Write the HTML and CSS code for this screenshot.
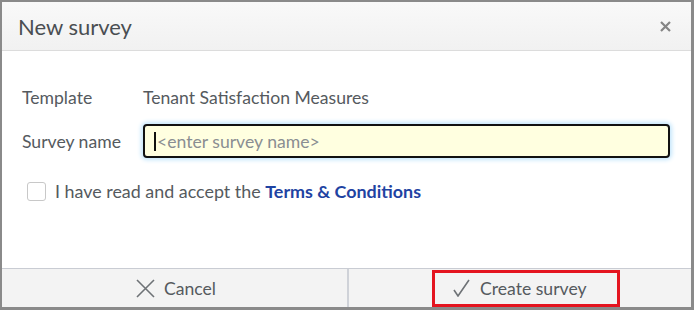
FILE: index.html
```html
<!DOCTYPE html>
<html>
<head>
<meta charset="utf-8">
<link rel="stylesheet" href="styles.css">
</head>
<body>
<div class="backdrop">
  <div class="dialog">
    <div class="header">
      <h1 class="title">New survey</h1>
      <span class="close">
        <svg width="11" height="11" viewBox="0 0 11 11"><path d="M1 1L10 10M10 1L1 10" stroke="#858585" stroke-width="2.2"/></svg>
      </span>
    </div>
    <div class="body">
      <div class="row template-row">
        <span class="label">Template</span>
        <span class="value">Tenant Satisfaction Measures</span>
      </div>
      <div class="row name-row">
        <span class="label">Survey name</span>
        <div class="input"><span class="caret"></span><span class="placeholder">&lt;enter survey name&gt;</span></div>
      </div>
      <div class="check-row">
        <span class="checkbox"></span>
        <span class="check-text">I have read and accept the <a class="link">Terms &amp; Conditions</a></span>
      </div>
    </div>
    <div class="footer">
      <div class="btn cancel">
        <svg width="19" height="19" viewBox="0 0 19 19"><path d="M1 1L18 18M18 1L1 18" stroke="#6e7276" stroke-width="1.6"/></svg>
        <span>Cancel</span>
      </div>
      <div class="btn primary">
        <span class="highlight">
          <svg width="17" height="18" viewBox="0 0 17 18"><path d="M1 11L5 17L16 1" fill="none" stroke="#6e7276" stroke-width="1.6"/></svg>
          <span>Create survey</span>
        </span>
      </div>
    </div>
  </div>
</div>
</body>
</html>
```

FILE: styles.css
```css
* { box-sizing: border-box; }
html, body { margin: 0; padding: 0; }
body {
  width: 694px;
  height: 310px;
  background: #8a8a8a;
  font-family: "Lato", "Open Sans", sans-serif;
  color: #555a5e;
}
.backdrop {
  padding: 2px 3px 3px 2px;
  height: 310px;
}
.dialog {
  background: #fff;
  height: 305px;
  display: flex;
  flex-direction: column;
}
.header {
  height: 49px;
  flex: none;
  background: linear-gradient(#f9f9f9, #f1f1f1);
  border-bottom: 1px solid #dcdcdc;
  display: flex;
  align-items: center;
  justify-content: space-between;
  padding: 0 20px 0 16px;
}
.title {
  margin: 0;
  font-weight: 400;
  font-size: 22px;
  color: #4a4e52;
  padding-top: 1px;
}
.close { display: flex; }
.body {
  flex: 1;
  padding: 35px 20px 0 20px;
}
.row {
  display: flex;
  align-items: center;
  font-size: 17.6px;
}
.template-row { height: 22px; }
.name-row { margin-top: 16px; }
.label { width: 121px; }
.value { color: #555a5e; }
.input {
  flex: 1;
  height: 34px;
  margin-right: 1px;
  border: 2px solid #111;
  border-radius: 4px;
  background: #ffffe0;
  box-shadow: 0 0 4px 2px #c4e6fb;
  display: flex;
  align-items: center;
  padding-left: 9px;
  color: #8a8e92;
}
.caret {
  width: 2px;
  height: 19px;
  background: #111;
  margin-right: 1px;
}
.check-row {
  display: flex;
  align-items: center;
  height: 22px;
  margin-top: 22px;
  padding-left: 5px;
  font-size: 17.9px;
}
.checkbox {
  width: 19px;
  height: 19px;
  border: 1px solid #c8c8c8;
  border-radius: 3px;
  margin-right: 9px;
}
.link { color: #1f43a2; font-weight: 700; }
.footer {
  height: 39px;
  flex: none;
  border-top: 1px solid #c9ccd3;
  background: #f3f3f3;
  display: grid;
  grid-template-columns: 345px 1fr;
}
.btn {
  display: flex;
  align-items: center;
  font-size: 17.6px;
  color: #555a5e;
  min-width: 0;
}
.cancel {
  padding-left: 134px;
  gap: 9px;
}
.primary {
  border-left: 2px solid #cfd2d8;
  padding-left: 83px;
}
.highlight {
  display: flex;
  align-items: center;
  gap: 10px;
  border: 3px solid #e4141f;
  height: 37px;
  width: 188px;
  padding-left: 18px;
}
```
